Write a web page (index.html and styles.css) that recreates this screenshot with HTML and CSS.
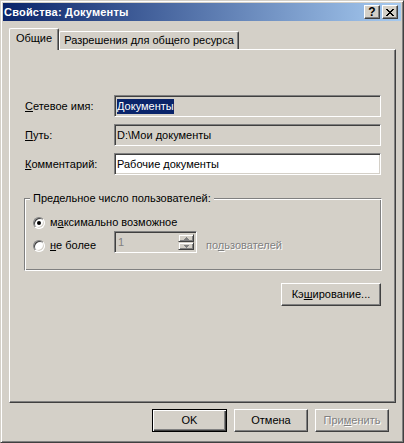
FILE: index.html
```html
<!DOCTYPE html>
<html lang="ru">
<head>
<meta charset="utf-8">
<title>Свойства: Документы</title>
<link rel="stylesheet" href="styles.css">
</head>
<body>
<div class="window">
  <div class="caption">
    <span class="caption-title">Свойства: Документы</span>
    <div class="caption-buttons">
      <button class="cbtn help">?</button>
      <button class="cbtn close">
        <svg width="8" height="7" viewBox="0 0 8 7" shape-rendering="crispEdges"><path d="M0 0h2v1H0zM6 0h2v1H6zM1 1h2v1H1zM5 1h2v1H5zM2 2h4v1H2zM3 3h2v1H3zM2 4h4v1H2zM1 5h2v1H1zM5 5h2v1H5zM0 6h2v1H0zM6 6h2v1H6z" fill="#000"/></svg>
      </button>
    </div>
  </div>
  <div class="client">
    <div class="tabs">
      <div class="tab active">Общие</div>
      <div class="tab">Разрешения для общего ресурса</div>
    </div>
    <div class="panel">
      <div class="fields">
        <span class="flabel"><u>С</u>етевое имя:</span>
        <div class="edit ro"><span class="sel">Документы</span></div>
        <span class="flabel"><u>П</u>уть:</span>
        <div class="edit ro">D:\Мои документы</div>
        <span class="flabel"><u>К</u>омментарий:</span>
        <div class="edit">Рабочие документы</div>
      </div>
      <fieldset class="group">
        <legend>Предельное число пользователей:</legend>
        <div class="radio-row first">
          <span class="radio checked"></span>
          <span>м<u>а</u>ксимально возможное</span>
        </div>
        <div class="radio-row second">
          <div class="radio-label">
            <span class="radio"></span>
            <span><u>н</u>е более</span>
          </div>
          <div class="spin">
            <span class="spin-value">1</span>
            <div class="spin-buttons">
              <span class="spin-btn"><svg width="5" height="3" viewBox="0 0 5 3" shape-rendering="crispEdges"><path d="M2 0h1v1H2zM1 1h3v1H1zM0 2h5v1H0z" fill="#808080"/></svg></span>
              <span class="spin-btn"><svg width="5" height="3" viewBox="0 0 5 3" shape-rendering="crispEdges"><path d="M0 0h5v1H0zM1 1h3v1H1zM2 2h1v1H2z" fill="#808080"/></svg></span>
            </div>
          </div>
          <span class="disabled users">по<u>л</u>ьзователей</span>
        </div>
      </fieldset>
      <div class="cache-row">
        <button class="btn cache">Кэ<u>ш</u>ирование...</button>
      </div>
    </div>
    <div class="dlg-buttons">
      <button class="btn default">OK</button>
      <button class="btn">Отмена</button>
      <button class="btn disabled">При<u>м</u>енить</button>
    </div>
  </div>
</div>
</body>
</html>
```
FILE: styles.css
```css
* { box-sizing: border-box; }
body {
  margin: 0;
  background: #d4d0c8;
  font: 11px/13px "Liberation Sans", Arial, sans-serif;
  color: #000;
}
u { text-decoration: underline; text-underline-offset: 1px; }
button { font: inherit; color: inherit; margin: 0; }

.window {
  width: 404px;
  height: 443px;
  border: 1px solid;
  border-color: #d4d0c8 #404040 #404040 #d4d0c8;
  box-shadow: inset 1px 1px #fff, inset -1px -1px #808080;
  padding: 2px;
  display: flex;
  flex-direction: column;
  background: #d4d0c8;
}

.caption {
  height: 18px;
  display: flex;
  align-items: center;
  background: linear-gradient(to right, #0a246a, #a6caf0);
  padding: 0 3px 0 1px;
}
.caption-title {
  flex: 1;
  color: #fff;
  font-weight: bold;
  font-size: 11px;
  letter-spacing: 0.2px;
}
.caption-buttons { display: flex; gap: 2px; }
.cbtn {
  width: 16px;
  height: 14px;
  padding: 0;
  background: #d4d0c8;
  border: 1px solid;
  border-color: #fff #404040 #404040 #fff;
  box-shadow: inset -1px -1px #808080;
  display: flex;
  align-items: center;
  justify-content: center;
  font-weight: bold;
  font-size: 12px;
  line-height: 12px;
}
.cbtn.close svg { display: block; margin-left: -1px; }

.client {
  flex: 1;
  display: flex;
  flex-direction: column;
  padding: 7px 5px 0 6px;
}

.tabs {
  display: flex;
  align-items: flex-end;
  height: 21px;
  position: relative;
  z-index: 1;
}
.tab {
  height: 18px;
  width: 180px;
  padding-top: 2px;
  text-align: center;
  background: #d4d0c8;
  border: 1px solid;
  border-bottom: 0;
  border-color: #fff #404040 #404040 #fff;
  box-shadow: inset -1px 0 #808080;
  border-radius: 2px 2px 0 0;
}
.tab.active {
  width: 50px;
  height: 22px;
  margin-bottom: -1px;
  padding-top: 3px;
}

.panel {
  flex: 1;
  border: 1px solid;
  border-color: #fff #404040 #404040 #fff;
  box-shadow: inset -1px -1px #808080;
  padding: 45px 14px 0 15px;
  display: flex;
  flex-direction: column;
}

.fields {
  display: grid;
  grid-template-columns: 89px 1fr;
  grid-auto-rows: 22px;
  row-gap: 7px;
  align-items: center;
}
.edit {
  height: 22px;
  border: 1px solid;
  border-color: #808080 #fff #fff #808080;
  box-shadow: inset 1px 1px #404040, inset -1px -1px #d4d0c8;
  background: #fff;
  padding: 4px 3px 0 2px;
  white-space: nowrap;
}
.edit.ro { background: #d4d0c8; }
.sel {
  background: #0a246a;
  color: #fff;
  padding: 1px 0 2px;
}

.group {
  margin: 17px -1px 0 -1px;
  padding: 11px 0 17px 5px;
  border: 1px solid;
  border-color: #808080 #fff #fff #808080;
  box-shadow: inset 1px 1px #fff, inset -1px -1px #808080;
  min-inline-size: 0;
}
.group legend {
  padding: 0 3px;
  line-height: 13px;
  background: #d4d0c8;
}
.radio-row {
  display: flex;
  margin-left: 3px;
}
.radio-row.first { align-items: center; height: 13px; gap: 5px; }
.radio-row.second { align-items: flex-start; height: 22px; margin-top: 2px; }
.radio-label {
  width: 81px;
  display: flex;
  align-items: center;
  gap: 5px;
  margin-top: 8px;
}
.radio {
  width: 12px;
  height: 12px;
  border-radius: 50%;
  background: #fff;
  border: 1px solid;
  border-color: #808080 #fff #fff #808080;
  box-shadow: inset 1px 1px #404040, inset -1px -1px #d4d0c8;
  display: flex;
  align-items: center;
  justify-content: center;
  flex: none;
}
.radio.checked::after {
  content: "";
  width: 4px;
  height: 4px;
  border-radius: 50%;
  background: #000;
}

.spin {
  width: 83px;
  height: 22px;
  border: 1px solid;
  border-color: #808080 #fff #fff #808080;
  box-shadow: inset 1px 1px #404040, inset -1px -1px #d4d0c8;
  background: #d4d0c8;
  padding: 2px 2px 2px 2px;
  display: flex;
}
.spin-value {
  flex: 1;
  color: #808080;
  padding: 2px 0 0 1px;
}
.spin-buttons {
  width: 16px;
  display: flex;
  flex-direction: column;
}
.spin-btn {
  flex: 1;
  border: 1px solid;
  border-color: #d4d0c8 #404040 #404040 #d4d0c8;
  box-shadow: inset 1px 1px #fff, inset -1px -1px #808080;
  display: flex;
  align-items: center;
  justify-content: center;
}
.spin-btn svg { display: block; }

.disabled {
  color: #808080;
  text-shadow: 1px 1px 0 #fff;
}
.users { margin: 8px 0 0 9px; }

.cache-row {
  display: flex;
  justify-content: flex-end;
  margin-top: 12px;
}
.btn {
  height: 23px;
  width: 74px;
  padding: 0;
  background: #d4d0c8;
  border: 1px solid;
  border-color: #fff #404040 #404040 #fff;
  box-shadow: inset -1px -1px #808080;
  text-align: center;
}
.btn.cache { width: 100px; }
.btn.default {
  width: 75px;
  border-color: #000;
  box-shadow: inset 1px 1px #fff, inset -1px -1px #404040, inset -2px -2px #808080;
}

.dlg-buttons {
  display: flex;
  justify-content: flex-end;
  gap: 7px;
  padding: 6px 7px 8px 0;
}
```
